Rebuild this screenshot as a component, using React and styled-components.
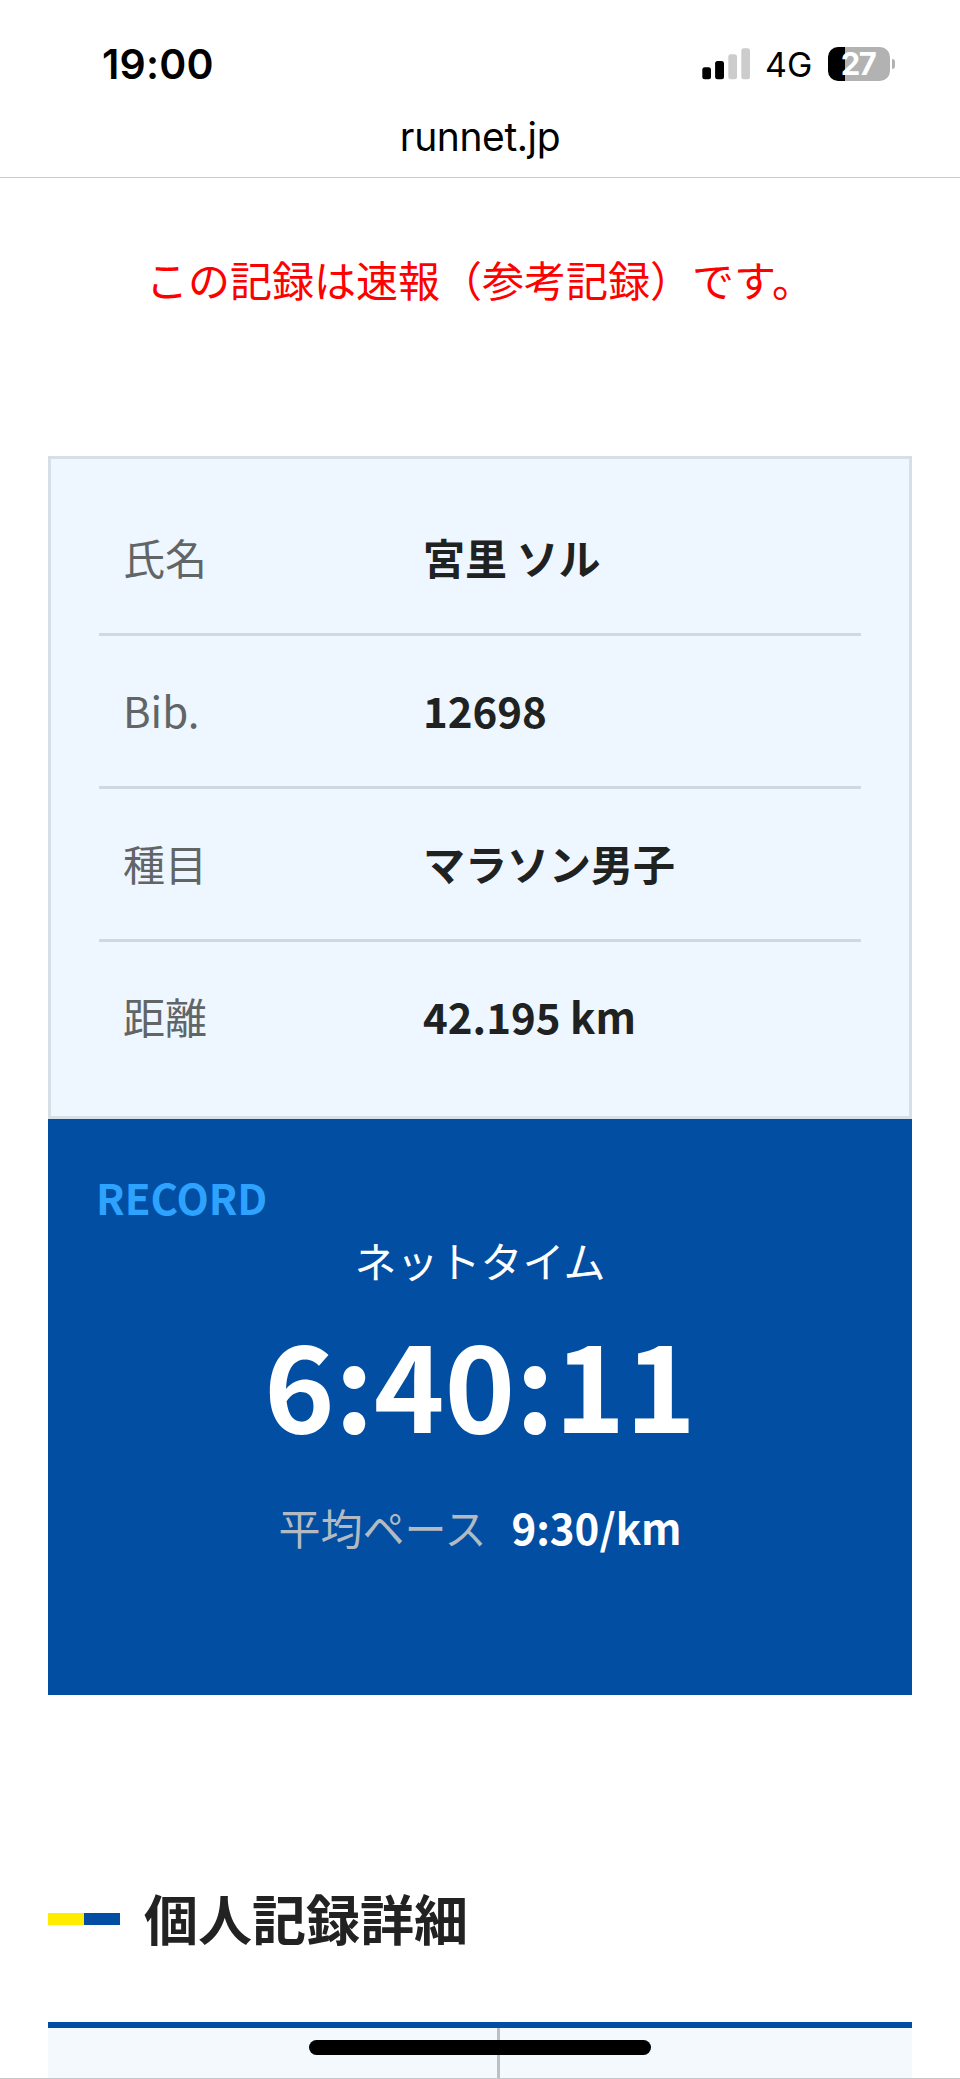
import React from 'react';
import styled, { createGlobalStyle } from 'styled-components';

const GlobalStyle = createGlobalStyle`
  * {
    box-sizing: border-box;
  }

  body {
    margin: 0;
    background: #fff;
    font-family: 'Noto Sans CJK JP', sans-serif;
    color: #202222;
  }
`;

const Screen = styled.div`
  position: relative;
  width: 960px;
  height: 2079px;
  overflow: hidden;
`;

const StatusBar = styled.header`
  display: flex;
  justify-content: space-between;
  align-items: center;
  height: 128px;
  padding: 0 65px 0 102px;
  font-family: Inter, sans-serif;
  color: #000;
`;

const Clock = styled.span`
  font-size: 41px;
  font-weight: 600;
  letter-spacing: 0.2px;
`;

const Indicators = styled.div`
  display: flex;
  align-items: center;
`;

const Network = styled.span`
  width: 46px;
  margin: 2px 17px 0 15px;
  font-size: 34px;
  line-height: 40px;
  white-space: nowrap;
`;

const Battery = styled.span`
  width: 62px;
  height: 34px;
  padding-right: 2px;
  border-radius: 10px;
  background: linear-gradient(90deg, #000 17px, #b2b2b2 17px);
  font-size: 31px;
  font-weight: 700;
  line-height: 34px;
  letter-spacing: -1.6px;
  text-align: center;
  color: #fff;
`;

const BatteryTip = styled.span`
  width: 3px;
  height: 10px;
  margin-left: 2px;
  border-radius: 0 4px 4px 0;
  background: #b2b2b2;
`;

const AddressBar = styled.div`
  height: 50px;
  border-bottom: 1px solid #ccc;
  font-family: Inter, sans-serif;
  font-size: 39px;
  line-height: 18px;
  letter-spacing: -0.4px;
  text-align: center;
  color: #000;
`;

const Notice = styled.p`
  margin: 70px 0 0;
  height: 208px;
  line-height: 62px;
  font-size: 42px;
  text-align: center;
  color: #f00;
`;

const Profile = styled.dl`
  margin: 0 48px;
  height: 663px;
  padding: 24px 48px;
  border: 3px solid #d6dfe6;
  background: #eef6ff;
`;

const ProfileRow = styled.div`
  display: flex;
  align-items: center;
  height: 153px;
  padding: 0 0 3px 24px;
  border-bottom: 3px solid #cfd7e2;
  font-size: 42px;

  &:last-child {
    border-color: transparent;
  }
`;

const Label = styled.dt`
  width: 300px;
  color: #616566;
`;

const Value = styled.dd`
  margin: 0;
  font-weight: 700;
`;

const RecordPanel = styled.section`
  margin: 0 48px;
  height: 576px;
  padding-top: 46px;
  background: #024ea2;
  color: #fff;
  text-align: center;
`;

const RecordTitle = styled.h2`
  margin: 0 0 0 48px;
  font-size: 42px;
  line-height: 64px;
  text-align: left;
  color: #2ea2ff;
`;

const TimeLabel = styled.p`
  margin: 0;
  font-size: 42px;
  line-height: 62px;
`;

const NetTime = styled.p`
  margin: 0;
  font-size: 120px;
  font-weight: 700;
  line-height: 181px;
`;

const Pace = styled.p`
  margin: 24px 0 0;
  font-size: 42px;
  line-height: 62px;
  color: #b3bac1;

  strong {
    margin-left: 25px;
    color: #fff;
  }
`;

const SectionTitle = styled.h2`
  display: flex;
  align-items: center;
  height: 80px;
  margin: 184px 48px 0;
  font-size: 54px;
  color: #222;
`;

const TitleMark = styled.span`
  width: 72px;
  height: 12px;
  margin-right: 24px;
  background: linear-gradient(90deg, #ffec00 50%, #024ea2 50%);
`;

const TitleText = styled.span`
  padding-bottom: 3px;
`;

const DetailTable = styled.div`
  display: grid;
  grid-template-columns: 449px 1fr;
  height: 57px;
  margin: 63px 48px 0;
  border-top: 6px solid #024ea2;
  background: #f4f9fe;
`;

const DetailCell = styled.div`
  border-left: ${({ $divided }) => ($divided ? '3px solid #bcc0c4' : '0')};
`;

const BottomEdge = styled.div`
  position: absolute;
  left: 0;
  right: 0;
  bottom: 0;
  height: 1px;
  background: #c6c7c9;
`;

const HomeIndicator = styled.div`
  position: absolute;
  left: 309px;
  bottom: 24px;
  width: 342px;
  height: 15px;
  border-radius: 8px;
  background: #000;
`;

const profile = [
  ['氏名', '宮里 ソル'],
  ['Bib.', '12698'],
  ['種目', 'マラソン男子'],
  ['距離', '42.195 km'],
];

function SignalIcon() {
  return (
    <svg width="48" height="32" viewBox="0 0 48 32">
      <rect x="0.3" y="19.3" width="8.7" height="12" rx="2.5" />
      <rect x="13.1" y="13" width="8.9" height="18.3" rx="2.5" />
      <rect x="26.3" y="6.3" width="8.7" height="25" rx="2.5" fill="#ccc" />
      <rect x="39.3" y="0.3" width="8.7" height="31" rx="2.5" fill="#ccc" />
    </svg>
  );
}

export default function App() {
  return (
    <Screen>
      <GlobalStyle />
      <StatusBar>
        <Clock>19:00</Clock>
        <Indicators>
          <SignalIcon />
          <Network>4G</Network>
          <Battery>27</Battery>
          <BatteryTip />
        </Indicators>
      </StatusBar>
      <AddressBar>runnet.jp</AddressBar>
      <Notice>この記録は速報（参考記録）です。</Notice>
      <Profile>
        {profile.map(([label, value]) => (
          <ProfileRow key={label}>
            <Label>{label}</Label>
            <Value>{value}</Value>
          </ProfileRow>
        ))}
      </Profile>
      <RecordPanel>
        <RecordTitle>RECORD</RecordTitle>
        <TimeLabel>ネットタイム</TimeLabel>
        <NetTime>6:40:11</NetTime>
        <Pace>平均ペース<strong>9:30/km</strong></Pace>
      </RecordPanel>
      <SectionTitle>
        <TitleMark />
        <TitleText>個人記録詳細</TitleText>
      </SectionTitle>
      <DetailTable>
        <DetailCell />
        <DetailCell $divided />
      </DetailTable>
      <BottomEdge />
      <HomeIndicator />
    </Screen>
  );
}
